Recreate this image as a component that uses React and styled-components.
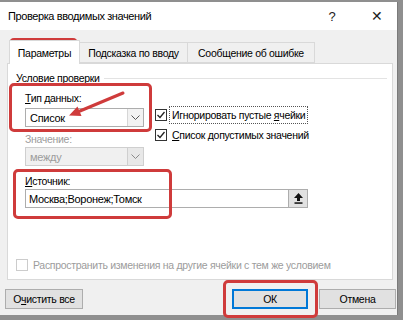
import styled, { createGlobalStyle } from "styled-components";

const GlobalStyle = createGlobalStyle`
  html, body {
    margin: 0;
    padding: 0;
  }
  body {
    background: #8f8f8f;
    font-family: "Liberation Sans", Arial, sans-serif;
    font-size: 10.5px;
    letter-spacing: -0.3px;
    color: #000;
  }
`;

const RED = "#cf3b3b";

function CheckBox({ checked, disabled }) {
  return (
    <Box disabled={disabled}>
      {checked && (
        <svg width="10" height="10" viewBox="0 0 10 10">
          <polyline points="1.5,5 4,7.5 8.5,2" fill="none" stroke="#222" strokeWidth="1.3" />
        </svg>
      )}
    </Box>
  );
}

function Chevron({ color = "#555" }) {
  return (
    <svg width="9" height="6" viewBox="0 0 9 6">
      <polyline points="0.5,0.5 4.5,4.5 8.5,0.5" fill="none" stroke={color} strokeWidth="1" />
    </svg>
  );
}

function Collapse() {
  return (
    <svg width="9" height="11" viewBox="0 0 9 11">
      <polygon points="4.5,0 9,5 6,5 6,8 3,8 3,5 0,5" fill="#111" />
      <rect x="0.5" y="9.3" width="8" height="1.5" fill="#111" />
    </svg>
  );
}

export default function App() {
  return (
    <Page>
      <GlobalStyle />
      <Dialog>
        <TitleBar>
          <Title>Проверка вводимых значений</Title>
          <TitleButton $w={50}>?</TitleButton>
          <TitleButton $w={40} $big>
            ✕
          </TitleButton>
        </TitleBar>
        <Body>
          <Tabs>
            <Tab $active $w={71}>Параметры</Tab>
            <Tab $w={108}>Подсказка по вводу</Tab>
            <Tab $w={127}>Сообщение об ошибке</Tab>
          </Tabs>
          <Panel>
            <Heading>
              Условие проверки
              <Rule />
            </Heading>
            <Fields>
              <Column>
                <Label>
                  <u>Т</u>ип данных:
                </Label>
                <Select>
                  <SelectValue>Список</SelectValue>
                  <SelectArrow>
                    <Chevron />
                  </SelectArrow>
                </Select>
                <Label $disabled $gap={5}>
                  Значение:
                </Label>
                <Select $disabled $gap={0}>
                  <SelectValue>между</SelectValue>
                  <SelectArrow $disabled>
                    <Chevron color="#8a8a8a" />
                  </SelectArrow>
                </Select>
              </Column>
              <Checks>
                <CheckRow>
                  <CheckBox checked />
                  <CheckLabel $focused>
                    Игнорировать пустые <u>я</u>чейки
                  </CheckLabel>
                </CheckRow>
                <CheckRow>
                  <CheckBox checked />
                  <CheckLabel>
                    <u>С</u>писок допустимых значений
                  </CheckLabel>
                </CheckRow>
              </Checks>
            </Fields>
            <Source>
              <Label>
                <u>И</u>сточник:
              </Label>
              <SourceRow>
                <SourceInput>Москва;Воронеж;Томск</SourceInput>
                <RefButton>
                  <Collapse />
                </RefButton>
              </SourceRow>
            </Source>
            <Spread>
              <CheckBox disabled />
              <SpreadText>Распространить изменения на другие ячейки с тем же условием</SpreadText>
            </Spread>
          </Panel>
          <Footer>
            <Button $w={78}>
              О<u>ч</u>истить все
            </Button>
            <FooterRight>
              <Button $w={76} $default>
                ОК
              </Button>
              <Button $w={77}>Отмена</Button>
            </FooterRight>
          </Footer>
        </Body>
      </Dialog>

      <Mark $x={9} $y={38} $w={69} $h={20} />
      <Mark $x={9} $y={83} $w={143} $h={49} />
      <Mark $x={13} $y={169} $w={159} $h={50} />
      <Mark $x={223} $y={280} $w={95} $h={38} />
      <ArrowLayer width="403" height="320" viewBox="0 0 403 320">
        <line x1="123" y1="93" x2="80" y2="111" stroke={RED} strokeWidth="3" strokeLinecap="round" />
        <polygon points="69,115.5 81.5,116 77.5,106.5" fill={RED} />
      </ArrowLayer>
    </Page>
  );
}

const Page = styled.div`
  position: relative;
  width: 403px;
  height: 320px;
  overflow: hidden;
  padding-top: 2px;
  box-sizing: border-box;
`;

const Dialog = styled.div`
  width: 398px;
  height: 313px;
  background: #f0f0f0;
  border-right: 1px solid #7a7a7a;
  box-sizing: border-box;
  display: flex;
  flex-direction: column;
`;

const TitleBar = styled.div`
  height: 28px;
  background: #fff;
  display: flex;
  align-items: center;
  padding-left: 8px;
`;

const Title = styled.div`
  flex: 1;
  font-size: 11px;
  letter-spacing: -0.4px;
`;

const TitleButton = styled.div`
  width: ${(p) => p.$w}px;
  text-align: center;
  font-size: ${(p) => (p.$big ? 14 : 13)}px;
  color: #222;
`;

const Body = styled.div`
  flex: 1;
  display: flex;
  flex-direction: column;
  padding: 10px 1px 0 7px;
`;

const Tabs = styled.div`
  display: flex;
  align-items: flex-end;
  padding-left: 2px;
  height: 23px;
`;

const Tab = styled.div`
  width: ${(p) => p.$w}px;
  height: ${(p) => (p.$active ? 24 : 21)}px;
  box-sizing: border-box;
  border: 1px solid #d9d9d9;
  border-bottom: ${(p) => (p.$active ? "none" : "1px solid #d9d9d9")};
  border-left: ${(p) => (p.$active ? "1px solid #d9d9d9" : "none")};
  background: ${(p) => (p.$active ? "#fff" : "#f0f0f0")};
  margin-bottom: ${(p) => (p.$active ? -1 : 0)}px;
  position: relative;
  z-index: ${(p) => (p.$active ? 1 : 0)};
  display: flex;
  align-items: center;
  justify-content: center;
`;

const Panel = styled.div`
  width: 386px;
  height: 217px;
  box-sizing: border-box;
  background: #fff;
  border: 1px solid #d9d9d9;
  display: flex;
  flex-direction: column;
  padding: 7px 5px 7px 8px;
`;

const Heading = styled.div`
  display: flex;
  align-items: center;
  gap: 4px;
  height: 14px;
  line-height: 14px;
`;

const Rule = styled.div`
  flex: 1;
  height: 1px;
  background: #e3e3e3;
`;

const Fields = styled.div`
  display: flex;
  margin-top: 6px;
  padding-left: 9px;
  gap: 11px;
`;

const Column = styled.div`
  width: 119px;
  display: flex;
  flex-direction: column;
`;

const Label = styled.div`
  height: 15px;
  line-height: 15px;
  margin-top: ${(p) => p.$gap || 0}px;
  color: ${(p) => (p.$disabled ? "#9c9c9c" : "#000")};
`;

const Select = styled.div`
  height: 19px;
  margin-top: ${(p) => (p.$gap === undefined ? 2 : p.$gap)}px;
  box-sizing: border-box;
  border: 1px solid ${(p) => (p.$disabled ? "#cfcfcf" : "#adadad")};
  background: ${(p) => (p.$disabled ? "#f0f0f0" : "#fff")};
  color: ${(p) => (p.$disabled ? "#9c9c9c" : "#000")};
  display: flex;
  align-items: stretch;
  font-size: 11px;
`;

const SelectValue = styled.div`
  flex: 1;
  display: flex;
  align-items: center;
  padding-left: 4px;
`;

const SelectArrow = styled.div`
  width: 15px;
  border-left: 1px solid ${(p) => (p.$disabled ? "#cfcfcf" : "#d6d6d6")};
  background: ${(p) => (p.$disabled ? "#e8e8e8" : "#f2f2f2")};
  display: flex;
  align-items: center;
  justify-content: center;
`;

const Checks = styled.div`
  display: flex;
  flex-direction: column;
  padding-top: 14px;
`;

const CheckRow = styled.div`
  height: 20px;
  display: flex;
  align-items: center;
  gap: 2px;
`;

const Box = styled.div`
  width: 12px;
  height: 12px;
  box-sizing: border-box;
  border: 1px solid ${(p) => (p.disabled ? "#cccccc" : "#333")};
  background: #fff;
  display: flex;
  align-items: center;
  justify-content: center;
  flex-shrink: 0;
`;

const CheckLabel = styled.div`
  padding: 1px 2px;
  border: 1px dotted ${(p) => (p.$focused ? "#555" : "transparent")};
  line-height: 14px;
`;

const Source = styled.div`
  display: flex;
  flex-direction: column;
  margin-top: 8px;
  padding-left: 9px;
`;

const SourceRow = styled.div`
  display: flex;
  height: 19px;
`;

const SourceInput = styled.div`
  width: 263px;
  box-sizing: border-box;
  border: 1px solid #adadad;
  border-right: none;
  display: flex;
  align-items: center;
  padding-left: 3px;
  font-size: 11px;
`;

const RefButton = styled.div`
  width: 20px;
  box-sizing: border-box;
  border: 1px solid #adadad;
  background: #e1e1e1;
  display: flex;
  align-items: center;
  justify-content: center;
`;

const Spread = styled.div`
  margin-top: auto;
  display: flex;
  align-items: center;
  gap: 5px;
  height: 15px;
`;

const SpreadText = styled.div`
  color: #9c9c9c;
`;

const Footer = styled.div`
  display: flex;
  justify-content: space-between;
  margin-top: 9px;
  margin-left: -2px;
`;

const FooterRight = styled.div`
  display: flex;
  gap: 11px;
`;

const Button = styled.div`
  width: ${(p) => p.$w}px;
  height: 20px;
  box-sizing: border-box;
  border: 1px solid ${(p) => (p.$default ? "#0078d7" : "#adadad")};
  box-shadow: ${(p) => (p.$default ? "inset 0 0 0 1px #0078d7" : "none")};
  background: #e1e1e1;
  display: flex;
  align-items: center;
  justify-content: center;
`;

const Mark = styled.div`
  position: absolute;
  left: ${(p) => p.$x}px;
  top: ${(p) => p.$y}px;
  width: ${(p) => p.$w}px;
  height: ${(p) => p.$h}px;
  box-sizing: border-box;
  border: 3px solid ${RED};
  border-radius: 5px;
  pointer-events: none;
`;

const ArrowLayer = styled.svg`
  position: absolute;
  left: 0;
  top: 0;
  pointer-events: none;
`;
